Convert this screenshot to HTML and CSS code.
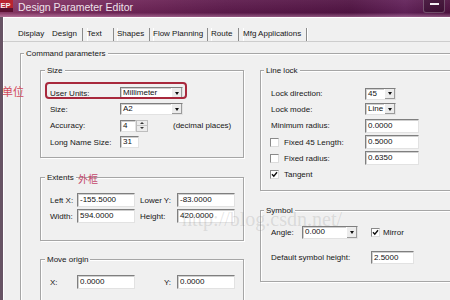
FILE: index.html
```html
<!DOCTYPE html>
<html lang="en">
<head>
    <meta charset="UTF-8">
    <title>Design Parameter Editor</title>
    <link rel="stylesheet" href="styles.css">
</head>
<body>
	<div class="titlebar">
	    <svg class="app-icon" viewBox="0 0 13 12" width="13" height="12">
		<rect x="0" y="0" width="13" height="12" fill="#b82430"/>
		<rect x="0" y="8" width="13" height="4" fill="#5a1030"/>
		<text x="0.5" y="8" font-size="7.5" font-weight="bold" font-family="Liberation Sans, sans-serif" fill="#f4eef2">EP</text>
	    </svg>
	    <span class="title">Design Parameter Editor</span>
	    <span class="min-btn"></span>
	</div>
	<div class="client">
	    <div class="tabs">
		<span class="tab">Display</span>
		<span class="tab tab-active">Design</span>
		<span class="tab-sep"></span>
		<span class="tab">Text</span>
		<span class="tab-sep"></span>
		<span class="tab">Shapes</span>
		<span class="tab-sep"></span>
		<span class="tab">Flow Planning</span>
		<span class="tab-sep"></span>
		<span class="tab">Route</span>
		<span class="tab-sep"></span>
		<span class="tab">Mfg Applications</span>
		<span class="tab-sep"></span>
	    </div>
	    <div class="page">
		<div class="group group-command">
		    <div class="group-title">Command parameters</div>
		    <div class="columns">
			<div class="col">
			    <div class="group group-size">
				<div class="group-title">Size</div>
				<div class="form form-size">
				    <span>User Units:</span>
				    <div class="field combo w-units"><span class="combo-text">Millimeter</span><span class="combo-btn"></span></div>
				    <span>Size:</span>
				    <div class="field combo w-units"><span class="combo-text">A2</span><span class="combo-btn"></span></div>
				    <span>Accuracy:</span>
				    <div class="accuracy">
					<div class="spin"><span class="field w-spin">4</span><span class="spin-btns"><span class="spin-up"></span><span class="spin-down"></span></span></div>
					<span class="hint">(decimal places)</span>
				    </div>
				    <span>Long Name Size:</span>
				    <span class="field w-name">31</span>
				</div>
				<span class="note-box"></span>
				<span class="note note-units">单位</span>
			    </div>

			    <div class="group group-extents">
				<div class="group-title">Extents</div>
				<div class="form form-xy">
				    <span>Left X:</span>
				    <span class="field tall w-xy">-155.5000</span>
				    <span class="lbl-right">Lower Y:</span>
				    <span class="field tall w-xy">-83.0000</span>
				    <span>Width:</span>
				    <span class="field tall w-xy">594.0000</span>
				    <span class="lbl-right">Height:</span>
				    <span class="field tall w-xy">420.0000</span>
				</div>
				<span class="note note-extents">外框</span>
			    </div>

			    <div class="group group-move">
				<div class="group-title">Move origin</div>
				<div class="form form-xy">
				    <span>X:</span>
				    <span class="field tall w-xy">0.0000</span>
				    <span class="lbl-end">Y:</span>
				    <span class="field tall w-xy">0.0000</span>
				</div>
			    </div>
			</div>

			<div class="col">
			    <div class="group group-lock">
				<div class="group-title group-title-r">Line lock</div>
				<div class="form form-lock">
				    <span>Lock direction:</span>
				    <div class="field combo w-short"><span class="combo-text">45</span><span class="combo-btn"></span></div>
				    <span>Lock mode:</span>
				    <div class="field combo w-short"><span class="combo-text">Line</span><span class="combo-btn"></span></div>
				    <span>Minimum radius:</span>
				    <span class="field tall w-num">0.0000</span>
				    <span class="check-row"><span class="check"></span>Fixed 45 Length:</span>
				    <span class="field tall w-num">0.5000</span>
				    <span class="check-row"><span class="check"></span>Fixed radius:</span>
				    <span class="field tall w-num">0.6350</span>
				    <span class="check-row"><span class="check checked"><svg viewBox="0 0 7 7" width="7" height="7"><path d="M1 3.2 L2.8 5.2 L6 1.2" fill="none" stroke="#111" stroke-width="1.4"/></svg></span>Tangent</span>
				</div>
			    </div>

			    <div class="group group-symbol">
				<div class="group-title group-title-r">Symbol</div>
				<div class="form form-symbol">
				    <div class="sym-row">
					<span class="lbl-angle">Angle:</span>
					<div class="field combo w-angle"><span class="combo-text">0.000</span><span class="combo-btn"></span></div>
					<span class="check check-mirror checked"><svg viewBox="0 0 7 7" width="7" height="7"><path d="M1 3.2 L2.8 5.2 L6 1.2" fill="none" stroke="#111" stroke-width="1.4"/></svg></span>
					<span class="mirror">Mirror</span>
				    </div>
				    <div class="sym-row">
					<span class="lbl-height">Default symbol height:</span>
					<span class="field w-height">2.5000</span>
				    </div>
				</div>
			    </div>
			</div>
		    </div>
		</div>
	    </div>
	</div>
	<div class="watermark">http://blog.csdn.net/</div>
</body>
</html>
```

FILE: styles.css
```css
	body {
	    margin: 0;
	    width: 450px;
	    height: 300px;
	    overflow: hidden;
	    position: relative;
	    background: #f0f0f0;
	    font-family: "Liberation Sans", Arial, sans-serif;
	    font-size: 8px;
	    color: #161616;
	}

	/* 标题栏 */
	.titlebar {
	    height: 17px;
	    display: flex;
	    align-items: flex-start;
	    background:
		linear-gradient(180deg, rgba(255,255,255,0.06) 0%, rgba(0,0,0,0.06) 75%, rgba(255,210,235,0.35) 100%),
		linear-gradient(90deg, #8e3c6a 0%, #76295c 22%, #5e1b4d 50%, #521444 78%, #63225a 90%, #4e1240 100%);
	    color: #eee2ea;
	}
	.app-icon {
	    flex: none;
	}
	.title {
	    margin-left: 5px;
	    font-size: 10.5px;
	    line-height: 14px;
	}
	.min-btn {
	    margin-left: auto;
	    margin-right: 5px;
	    width: 22px;
	    height: 13px;
	    box-sizing: border-box;
	    border: 1px solid rgba(255,255,255,0.25);
	    border-top: 0;
	    border-radius: 0 0 3px 3px;
	    background: rgba(0,0,0,0.22);
	    display: flex;
	    justify-content: center;
	}
	.min-btn::after {
	    content: "";
	    width: 9px;
	    height: 2px;
	    margin-top: 3px;
	    background: #f4f0f4;
	}

	/* 窗口主体 */
	.client {
	    height: 283px;
	    padding-top: 10px;
	    box-sizing: border-box;
	    border-left: 3px solid #675364;
	    box-shadow: inset 1px 1px 0 #fff;
	}

	.tabs {
	    display: grid;
	    grid-template-columns: 34px 30px 5px 26px 4px 32px 4px 54px 4px 27px 5px 63px 1px;
	    height: 14px;
	    padding-left: 15px;
	}
	.tab {
	    line-height: 14px;
	    white-space: nowrap;
	}
	.tab-sep {
	    align-self: end;
	    height: 13px;
	    border-left: 1px solid #8a8a8a;
	    box-shadow: 1px 0 0 #fff;
	}

	.page {
	    border-top: 1px solid #cdcdcd;
	    padding-left: 17px;
	}

	/* 分组框 */
	.group {
	    position: relative;
	    box-sizing: border-box;
	    border: 1px solid #a6a6a6;
	    box-shadow: inset 1px 1px 0 #fff, 1px 1px 0 #fff;
	}
	.group-title {
	    display: table;
	    margin: -6px 0 0 4px;
	    padding: 0 2px;
	    line-height: 11px;
	    background: #f0f0f0;
	    white-space: nowrap;
	}
	.group-title-r {
	    margin-left: 3px;
	}

	/* 右侧和底部超出窗口，不画边框 */
	.group-command {
	    margin-top: 11px;
	    width: 430px;
	    height: 247px;
	    border-right: 0;
	    border-bottom: 0;
	}
	.group-command > .group-title {
	    margin-left: 3px;
	}
	.columns {
	    display: grid;
	    grid-template-columns: 204px 1fr;
	    column-gap: 16px;
	    margin: 11px 0 0 19px;
	}
	.col {
	    display: flex;
	    flex-direction: column;
	}

	.group-size { height: 88px; }
	.group-extents { height: 64px; margin-top: 19px; }
	.group-move { height: 41px; margin-top: 18px; border-bottom: 0; }
	.group-lock { height: 121px; border-right: 0; }
	.group-symbol { height: 72px; margin-top: 19px; border-right: 0; }

	.form {
	    display: grid;
	    align-items: center;
	    justify-items: start;
	    margin: 9px 0 0 9px;
	    white-space: nowrap;
	}
	.form-size {
	    grid-template-columns: 70px auto;
	    grid-template-rows: 16px 16px 17px 16px;
	}
	.form-xy {
	    grid-template-columns: 27px 58px 42px 58px;
	    grid-auto-rows: 16px;
	}
	.lbl-right {
	    padding-left: 5px;
	}
	.lbl-end {
	    justify-self: end;
	    margin-right: 6px;
	}
	.form-lock {
	    grid-template-columns: 94px auto;
	    grid-template-rows: 15px 16px 17px 16px 16px 16px;
	    margin: 10px 0 0 10px;
	}
	.form-symbol {
	    grid-auto-rows: 14px;
	    row-gap: 11px;
	    margin-left: 10px;
	}

	/* 输入框 */
	.field {
	    box-sizing: border-box;
	    height: 12px;
	    padding-left: 2px;
	    line-height: 10px;
	    background: #fff;
	    color: #111;
	    border: 1px solid;
	    border-color: #7f7f7f #e2e2e2 #e2e2e2 #7f7f7f;
	    box-shadow: inset 1px 1px 0 #cfcfcf;
	}
	.field.tall {
	    height: 14px;
	    line-height: 12px;
	}
	.w-units { width: 63px; }
	.w-spin { width: 16px; }
	.w-name { width: 19px; }
	.w-xy { width: 58px; }
	.w-short { width: 31px; }
	.w-num { width: 54px; }
	.w-angle { width: 56px; height: 13px; }
	.w-height { width: 43px; height: 13px; line-height: 11px; }

	.combo {
	    display: flex;
	    padding-left: 0;
	}
	.combo-text {
	    flex: 1;
	    padding-left: 2px;
	}
	.combo-btn {
	    width: 10px;
	    display: flex;
	    align-items: center;
	    justify-content: center;
	    background: #ececec;
	    border-left: 1px solid #fff;
	    box-shadow: inset -1px -1px 0 #9a9a9a;
	}
	.combo-btn::after {
	    content: "";
	    border-left: 2.5px solid transparent;
	    border-right: 2.5px solid transparent;
	    border-top: 3px solid #111;
	}

	.accuracy {
	    display: flex;
	    align-items: center;
	}
	.spin {
	    display: flex;
	    height: 12px;
	}
	.spin-btns {
	    width: 12px;
	    display: flex;
	    flex-direction: column;
	    background: #ececec;
	    border: 1px solid #bdbdbd;
	    box-sizing: border-box;
	}
	.spin-up, .spin-down {
	    flex: 1;
	    display: flex;
	    align-items: center;
	    justify-content: center;
	}
	.spin-up { border-bottom: 1px solid #c4c4c4; }
	.spin-up::after {
	    content: "";
	    border-left: 2px solid transparent;
	    border-right: 2px solid transparent;
	    border-bottom: 2px solid #333;
	}
	.spin-down::after {
	    content: "";
	    border-left: 2px solid transparent;
	    border-right: 2px solid transparent;
	    border-top: 2px solid #333;
	}
	.hint {
	    margin-left: 25px;
	}

	/* 复选框 */
	.check-row {
	    display: flex;
	    align-items: center;
	}
	.check {
	    width: 9px;
	    height: 9px;
	    box-sizing: border-box;
	    margin: 0 5px 0 -1px;
	    display: flex;
	    align-items: center;
	    justify-content: center;
	    background: #fff;
	    border: 1px solid;
	    border-color: #8a8a8a #dcdcdc #dcdcdc #8a8a8a;
	}

	.sym-row {
	    display: flex;
	    align-items: center;
	}
	.lbl-angle { width: 31px; }
	.check-mirror { margin: 0 3px 0 13px; }
	.lbl-height { width: 100px; }

	/* 标注 */
	.note-box {
	    position: absolute;
	    left: 4px;
	    top: 11px;
	    width: 142px;
	    height: 17px;
	    box-sizing: border-box;
	    border: 2px solid #a8283c;
	    border-radius: 4px;
	}
	.note {
	    position: absolute;
	    font-family: "Liberation Sans", "Noto Sans CJK SC", sans-serif;
	    white-space: nowrap;
	}
	.note-units {
	    left: -39px;
	    top: 15px;
	    font-size: 11px;
	    line-height: 13px;
	    color: #d24a5c;
	}
	.note-extents {
	    left: 37px;
	    top: -4px;
	    font-size: 10px;
	    line-height: 11px;
	    color: #c4476a;
	}

	.watermark {
	    position: absolute;
	    left: 182px;
	    top: 209px;
	    font-family: "Liberation Serif", serif;
	    font-size: 20px;
	    line-height: 20px;
	    color: rgba(110, 110, 110, 0.18);
	    pointer-events: none;
	}
```
